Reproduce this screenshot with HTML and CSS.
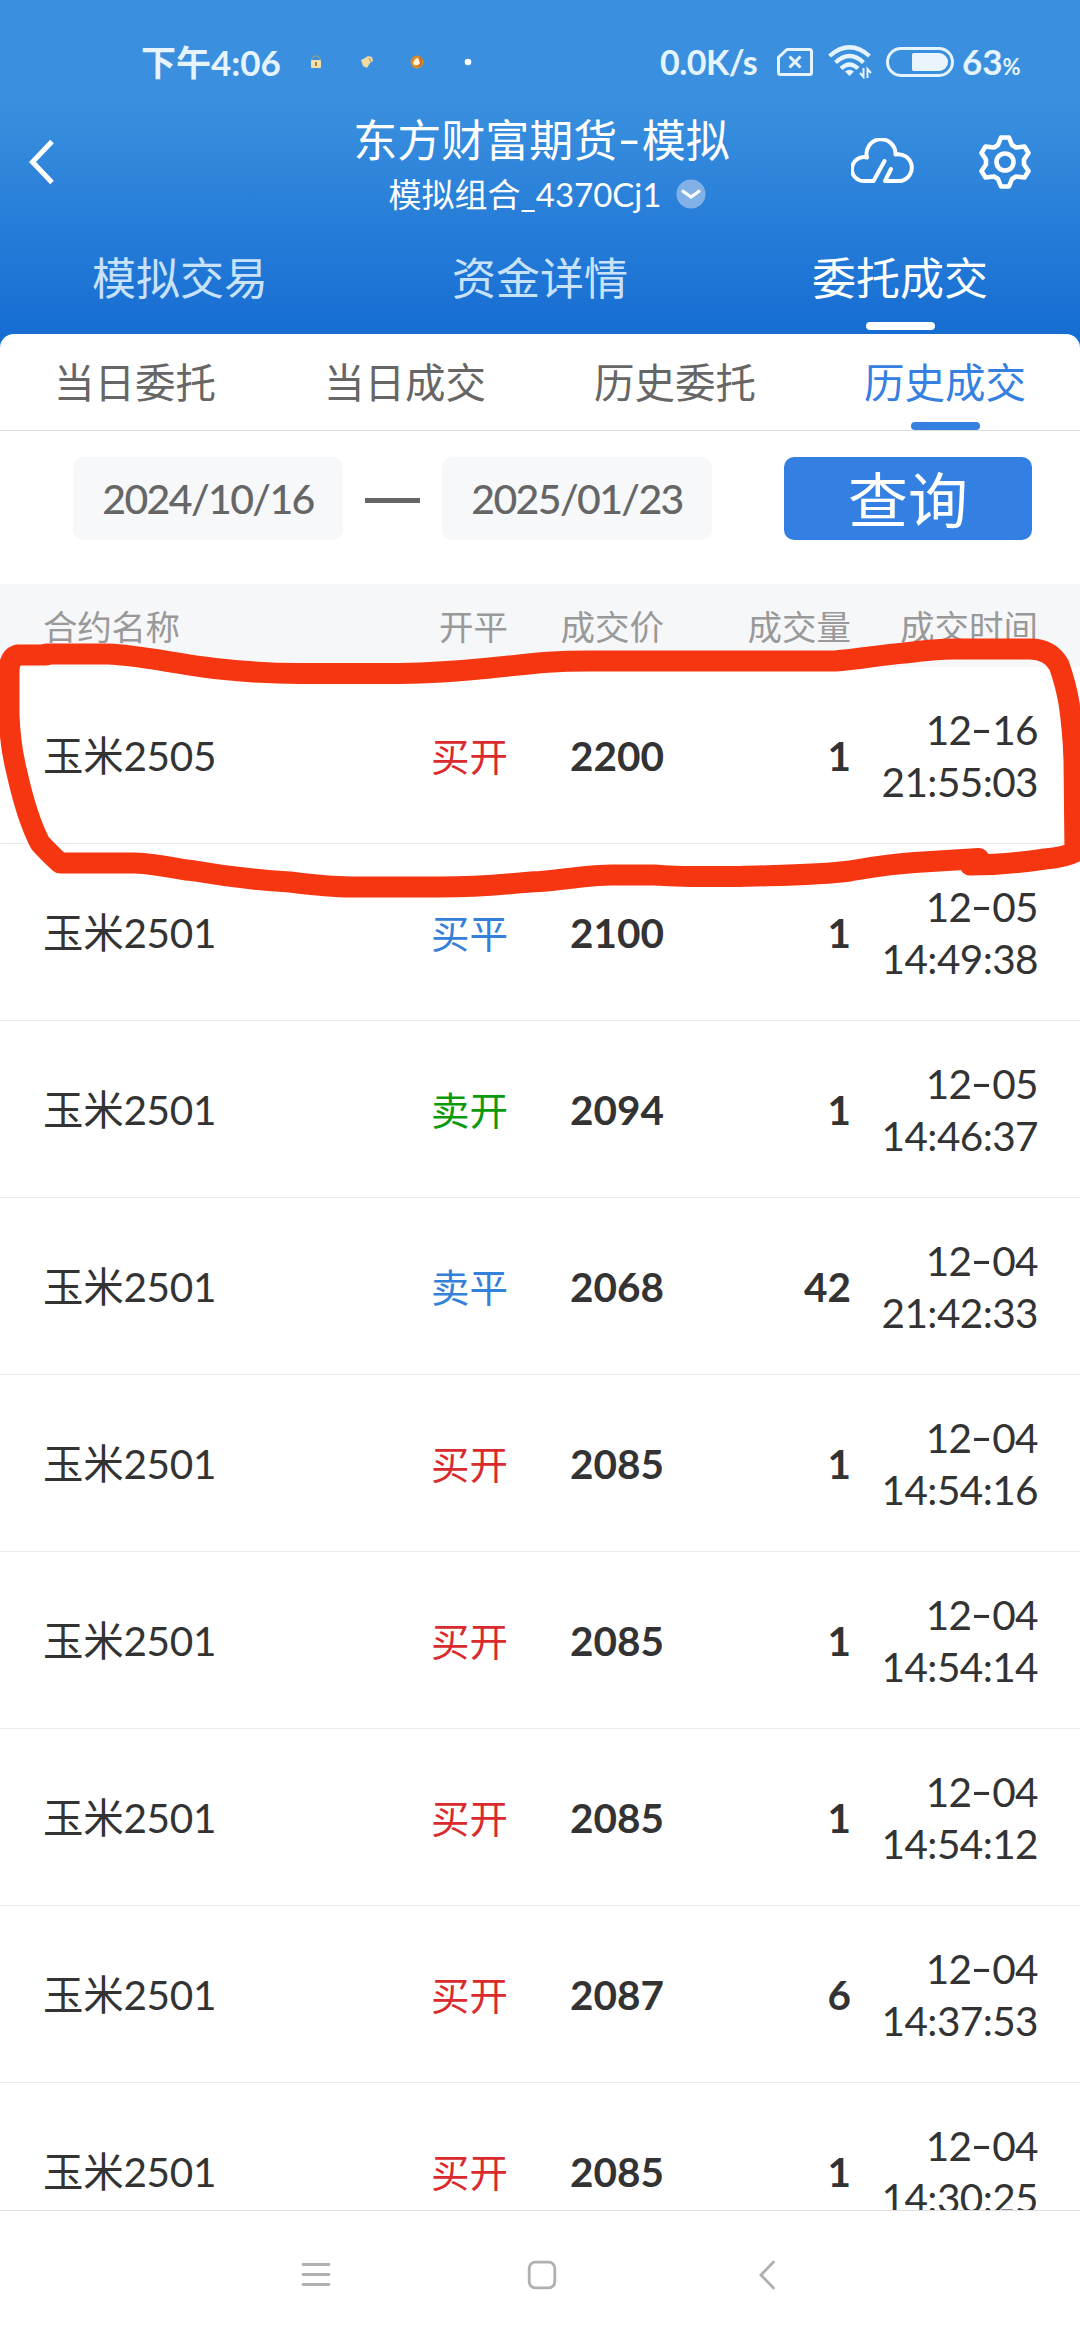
FILE: index.html
```html
<!DOCTYPE html>
<html lang="zh-CN">
<head>
    <meta charset="UTF-8">
    <meta name="viewport" content="width=device-width, initial-scale=1.0">
    <title>历史成交</title>
    <link rel="stylesheet" href="styles.css">
</head>
<body>
    <div class="phone">
        <div class="top">
            <div class="statusbar">
                <span class="time">下午4:06</span>
                <div class="notices">
                    <svg width="14" height="14" viewBox="0 0 14 14"><path d="M3 6V3Q7-1 11 3V6" fill="none" stroke="#7f9c9c" stroke-width="1.2"/><rect x="2" y="5" width="10" height="8" rx="1" fill="#f3dfae"/><path d="M7 7v4" stroke="#a8813c" stroke-width="2"/></svg>
                    <svg width="14" height="14" viewBox="0 0 14 14"><path d="M1 5L5 3L8 1L12 2L13 6L10 8L7 13L3 11Z" fill="#f3d9a4"/><path d="M9 3L11 7" stroke="#b98a4a"/></svg>
                    <svg width="14" height="14" viewBox="0 0 14 14"><circle cx="7" cy="7" r="6.5" fill="#d98a2b"/><path d="M3 8Q5 3 8 3L10 8Q8 11 4 10Z" fill="#fff3da"/><path d="M10 2Q13 7 9 12" stroke="#c4502a" fill="none"/></svg>
                    <svg width="14" height="14" viewBox="0 0 14 14"><circle cx="7" cy="7" r="3.3" fill="#fff"/></svg>
                </div>
                <span class="speed">0.0K/s</span>
                <svg class="sim" width="36" height="28" viewBox="0 0 36 28" fill="none" stroke="#e6f4ff" stroke-width="3"><path d="M10 1.5H32.500Q34.500 1.500 34.500 3.500V24.500Q34.500 26.500 32.500 26.500H3.500Q1.500 26.500 1.500 24.500V9.500Z"/><path d="M12.500 8.500L23.500 19.500M23.500 8.500L12.500 19.500"/></svg>
                <svg class="wifi" width="44" height="34" viewBox="0 0 44 34" fill="none" stroke="#e6f4ff" stroke-width="4.200"><path d="M1.500 11Q21.500-6.500 41.500 11"/><path d="M7.500 17.500Q21.500 4.500 35.500 17.500"/><path d="M13 23.500Q21.500 15.500 30 23.500"/><path d="M17 26.500Q21.500 23 26 26.500L21.500 31Z" fill="#e6f4ff" stroke="none"/><path d="M35.500 23V32L32 28M39.500 33V24L43 28" stroke-width="2"/></svg>
                <div class="battery"><div class="level"></div></div>
                <span class="percent">63<small>%</small></span>
            </div>
            <div class="titlebar">
                <svg class="back" width="28" height="46" viewBox="0 0 28 46"><path d="M24 2.500L4.500 23L24 43.500" fill="none" stroke="#fff" stroke-width="5"/></svg>
                <div class="titles">
                    <h1>东方财富期货<i>-</i>模拟</h1>
                    <div class="account">模拟组合_4370Cj1
                        <svg width="30" height="30" viewBox="0 0 30 30"><circle cx="15" cy="15" r="14.500" fill="#82b1e8"/><path d="M6 11.500L15 18L24 11.500" fill="none" stroke="#fff" stroke-width="3.200"/></svg>
                    </div>
                </div>
                <svg class="cloud" width="66" height="46" viewBox="0 0 66 46" fill="none" stroke="#fff" stroke-width="4" stroke-linecap="round" stroke-linejoin="round"><path d="M33.500 23L22.500 43H14.500A12 12 0 1 1 16 19.500A14.500 14.500 0 1 1 44.500 16.500A13.500 13.500 0 1 1 50 43H34L40 31"/></svg>
                <svg class="gear" width="56" height="56" viewBox="0 0 56 56" fill="none" stroke="#fff" stroke-width="4.600" stroke-linejoin="round"><path d="M24 3.500H32L35 11L39 13.500L47.500 12.500L51.500 19L47 25.500V30.500L51.500 37L47.500 43.500L39 42.500L35 45L32 52.500H24L21 45L17 42.500L8.500 43.500L4.500 37L9 30.500V25.500L4.500 19L8.500 12.500L17 13.500L21 11Z"/><circle cx="28" cy="28" r="8.500"/></svg>
            </div>
            <div class="maintabs">
                <div>模拟交易</div>
                <div>资金详情</div>
                <div class="active">委托成交</div>
            </div>
        </div>

        <div class="panel">
            <div class="subtabs">
                <div>当日委托</div>
                <div>当日成交</div>
                <div>历史委托</div>
                <div class="active">历史成交</div>
            </div>
            <div class="search">
                <div class="date">2024/10/16</div>
                <div class="dash"></div>
                <div class="date">2025/01/23</div>
                <button class="query">查询</button>
            </div>
            <div class="row head">
                <span>合约名称</span><span>开平</span><span>成交价</span><span>成交量</span><span>成交时间</span>
            </div>
            <div class="list">
                <div class="row"><span>玉米2505</span><span class="side red">买开</span><b>2200</b><b>1</b><span class="when">12<i>-</i>16<br>21:55:03</span></div>
                <div class="row"><span>玉米2501</span><span class="side blue">买平</span><b>2100</b><b>1</b><span class="when">12<i>-</i>05<br>14:49:38</span></div>
                <div class="row"><span>玉米2501</span><span class="side green">卖开</span><b>2094</b><b>1</b><span class="when">12<i>-</i>05<br>14:46:37</span></div>
                <div class="row"><span>玉米2501</span><span class="side blue">卖平</span><b>2068</b><b>42</b><span class="when">12<i>-</i>04<br>21:42:33</span></div>
                <div class="row"><span>玉米2501</span><span class="side red">买开</span><b>2085</b><b>1</b><span class="when">12<i>-</i>04<br>14:54:16</span></div>
                <div class="row"><span>玉米2501</span><span class="side red">买开</span><b>2085</b><b>1</b><span class="when">12<i>-</i>04<br>14:54:14</span></div>
                <div class="row"><span>玉米2501</span><span class="side red">买开</span><b>2085</b><b>1</b><span class="when">12<i>-</i>04<br>14:54:12</span></div>
                <div class="row"><span>玉米2501</span><span class="side red">买开</span><b>2087</b><b>6</b><span class="when">12<i>-</i>04<br>14:37:53</span></div>
                <div class="row"><span>玉米2501</span><span class="side red">买开</span><b>2085</b><b>1</b><span class="when">12<i>-</i>04<br>14:30:25</span></div>
            </div>
        </div>

        <div class="navbar">
            <svg width="32" height="32" viewBox="0 0 32 32"><path d="M3 5.500H29M3 15.500H29M3 25.500H29"/></svg>
            <svg width="32" height="32" viewBox="0 0 32 32"><rect x="3.200" y="3.200" width="25.600" height="25.600" rx="6"/></svg>
            <svg width="32" height="32" viewBox="0 0 32 32"><path d="M21.500 3L9 16L21.500 29"/></svg>
        </div>

        <!-- hand drawn ring round the first record -->
        <svg class="marker" width="1080" height="300" viewBox="0 620 1080 300">
            <path d="M46 655H17Q9 658 9 672V715Q10 745 17 773Q27 818 40 843Q48 852 60 863H135C160 864 180 870 195 871Q240 879 290 882Q330 887 350 887H440C490 887 510 883 540 881.500C570 879 590 875 612 875H655C670 876 675 876.500 690 876.500H740C790 875 820 875 850 871C880 866 890 864 915 862.500L979 858.500"/>
            <path d="M46 654H108C140 655 175 664 220 669Q260 673.500 300 673.500H400C440 673 470 670 490 668C530 664 545 661 590 661H835C860 659 880 655 905 653Q935 649 955 649H1030Q1050 649 1059 665Q1066 685 1069 703Q1073 730 1074 760L1075 852Q1066 857 1045 859Q1005 865 970 865"/>
        </svg>
    </div>
</body>
</html>
```
FILE: styles.css
```css
*{
    margin:0;
    padding:0;
    box-sizing:border-box;
}
body{
    font-family:Lato,"Noto Sans CJK SC",sans-serif;
    background:#fff;
    color:#333;
}
i{
    font-style:normal;
    display:inline-block;
    transform:translateY(-1px) scaleX(1.5);
    margin:0 3px;
}
svg{
    display:block;
    flex:none;
}
.phone{
    width:1080px;
    height:2340px;
    position:relative;
    overflow:hidden;
    display:flex;
    flex-direction:column;
}
.top{
    height:350px;
    flex:none;
    background:linear-gradient(#3a90de 0,#3a90de 100px,#166dd2 334px);
    color:#fff;
}
.statusbar{
    height:104px;
    padding:20px 50px 0 141px;
    display:flex;
    align-items:center;
    font-size:35px;
    font-weight:bold;
    color:#e6f4ff;
}
.time{
    width:168px;
    margin-top:-4px;
}
.notices{
    display:flex;
    gap:36.500px;
    width:351px;
}
.speed{
    width:117px;
    font-size:34px;
    margin-top:-2px;
    letter-spacing:-.5px;
}
.wifi{
    margin:0 14px 0 15px;
}
.battery{
    width:68px;
    height:30px;
    flex:none;
    border:3px solid #e6f4ff;
    border-radius:15px;
    padding:3px;
    display:flex;
    justify-content:flex-end;
    margin-right:8px;
}
.level{
    width:36px;
    background:#eaf4fd;
    border-radius:2px 10px 10px 2px;
}
.percent{
    margin-top:-2px;
}
.percent small{
    font-size:22px;
}
.titlebar{
    height:130px;
    padding:0 47px 0 28px;
    display:flex;
}
.back{
    margin-top:35px;
}
.titles{
    width:770px;
    padding-left:202px;
    text-align:center;
}
h1{
    font-size:44px;
    font-weight:normal;
    line-height:72px;
}
h1 i{
    margin:0 4px;
}
.account{
    display:flex;
    align-items:center;
    justify-content:center;
    gap:15px;
    font-size:33px;
    line-height:36px;
    padding-left:12px;
}
.cloud{
    margin:34px 60px 0 26px;
}
.gear{
    margin-top:30px;
}
.maintabs{
    display:flex;
    height:100px;
}
.maintabs div{
    flex:1;
    text-align:center;
    font-size:44px;
    line-height:88px;
    color:#c9e2fb;
}
.maintabs .active{
    color:#fff;
}
.active::after{
    content:"";
    display:block;
    width:69px;
    height:8px;
    border-radius:4px;
    margin:0 auto;
    background:#fff;
}
.panel{
    margin-top:-16px;
    height:1876px;
    flex:none;
    overflow:hidden;
    background:#fff;
    border-radius:14px 14px 0 0;
}
.subtabs{
    display:flex;
    height:97px;
    border-bottom:1px solid #ddd;
}
.subtabs div{
    flex:1;
    text-align:center;
    font-size:40.500px;
    padding-top:10px;
    line-height:78px;
    color:#666;
}
.subtabs .active{
    color:#3580e0;
}
.subtabs .active::after{
    background:#3580e0;
}
.search{
    display:flex;
    align-items:center;
    padding:26px 48px 44px 73px;
}
.date{
    width:270px;
    height:83px;
    border-radius:10px;
    background:#f6f8fa;
    color:#666;
    font-size:41px;
    font-weight:500;
    line-height:83px;
    letter-spacing:-1.600px;
    text-align:center;
}
.dash{
    width:55px;
    height:5px;
    margin:4px 22px 0;
    background:#666;
}
.query{
    width:248px;
    height:83px;
    margin-left:auto;
    border:none;
    border-radius:10px;
    background:#3380e2;
    color:#fff;
    font:60px/79px "Noto Sans CJK SC",sans-serif;
    padding-bottom:4px;
}
.row{
    display:grid;
    grid-template-columns:381px 84px 156px 187px 187px;
    align-items:center;
    height:177px;
    padding:2px 42px 0 43px;
    border-bottom:1px solid #ebebeb;
    font-size:40.500px;
    line-height:52px;
    text-align:right;
}
.row :first-child{
    text-align:left;
    letter-spacing:-.3px;
}
.head{
    height:83px;
    border:none;
    background:#f6f7f9;
    color:#999;
    font-size:34.500px;
}
.side{
    font-size:38.500px;
}
.when{
    letter-spacing:-.600px;
}
.red{
    color:#d92b2e;
}
.blue{
    color:#3580d8;
}
.green{
    color:#0b9a0b;
}
.navbar{
    flex:1;
    border-top:1px solid #e0e0e0;
    display:flex;
    justify-content:center;
    gap:194px;
    padding:48px 0 0 3px;
}
.navbar svg{
    fill:none;
    stroke:#b0b0b0;
    stroke-width:2.800;
    stroke-linecap:round;
}
.marker{
    position:absolute;
    left:0;
    top:620px;
    fill:none;
    stroke:#f63511;
    stroke-width:21;
    stroke-linecap:round;
    stroke-linejoin:round;
}
```
